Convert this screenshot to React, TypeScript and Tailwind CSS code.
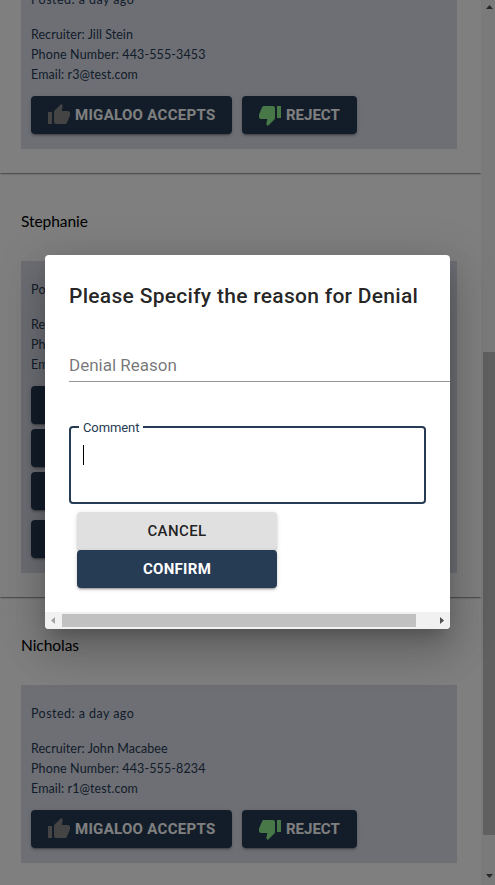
import React from "react";
import { MdThumbUp, MdThumbDown } from "react-icons/md";

const raised =
  "shadow-[0_3px_1px_-2px_rgba(0,0,0,.2),0_2px_2px_0_rgba(0,0,0,.14),0_1px_5px_0_rgba(0,0,0,.12)]";

function ActionButton({ kind, className = "" }: { kind: "accept" | "reject"; className?: string }) {
  const accept = kind === "accept";
  return (
    <button
      className={`flex h-[38px] shrink-0 items-center gap-1 rounded bg-[#263b54] pl-4 font-[Roboto,sans-serif] text-[15px] font-bold whitespace-nowrap text-white ${raised} ${accept ? "w-[201px]" : "w-[115px]"} ${className}`}
    >
      {accept ? (
        <MdThumbUp className="size-6 shrink-0 text-[#888]" />
      ) : (
        <MdThumbDown className="size-6 shrink-0 text-[#90ee90]" />
      )}
      <span className={accept ? "tracking-[0.3px]" : "tracking-[0px]"}>{accept ? "MIGALOO ACCEPTS" : "REJECT"}</span>
    </button>
  );
}

function Candidate({
  name,
  recruiter,
  phone,
  email,
  stacked = false,
}: {
  name: string;
  recruiter: string;
  phone: string;
  email: string;
  stacked?: boolean;
}) {
  return (
    <section className="bg-white pr-6 pb-6 pl-[21px] shadow-[0_2px_1px_-1px_rgba(0,0,0,.2),0_1px_1px_0_rgba(0,0,0,.14),0_1px_3px_0_rgba(0,0,0,.12)]">
      <h2 className="h-[72px] pt-[22px] text-[15.5px] leading-5 tracking-[-0.05px] text-black">{name}</h2>
      <div className="w-[436px] bg-[#dcdeea] px-2.5 pt-[19px] pb-[15px] text-[12.5px] leading-5 text-[#263b54]">
        <p className="tracking-[0.45px]">Posted: a day ago</p>
        <p className="mt-[15px] tracking-[0.05px]">Recruiter: {recruiter}</p>
        <p className="tracking-[0.13px]">Phone Number: {phone}</p>
        <p className="tracking-[0.1px]">Email: {email}</p>
        {stacked ? (
          <div className="mt-[11px] flex flex-col gap-[5px]">
            <ActionButton kind="accept" />
            <ActionButton kind="accept" />
            <ActionButton kind="accept" />
            <ActionButton kind="reject" className="mt-[5px]" />
          </div>
        ) : (
          <div className="mt-[11px] flex gap-2.5">
            <ActionButton kind="accept" />
            <ActionButton kind="reject" />
          </div>
        )}
      </div>
    </section>
  );
}

function DenialDialog() {
  return (
    <div className="flex h-[374px] w-[405px] flex-col overflow-hidden rounded bg-white font-[Roboto,sans-serif] shadow-[0_11px_15px_-7px_rgba(0,0,0,.2),0_24px_38px_3px_rgba(0,0,0,.14),0_9px_46px_8px_rgba(0,0,0,.12)]">
      <div className="flex-1 pl-6">
        <h1 className="pt-[25px] text-[21px] leading-8 font-medium tracking-[0.29px] whitespace-nowrap text-black/87">
          Please Specify the reason for Denial
        </h1>
        <div className="mt-10 h-[30px] border-b border-[#949494] text-[17px] leading-[27px] text-black/55">
          Denial Reason
        </div>
        <fieldset className="mt-[38px] h-[84px] w-[357px] rounded border-2 border-[#263b54] pl-3">
          <legend className="-ml-1 h-[14px] px-1 text-[13px] leading-4 tracking-[-0.1px] text-[#263b54]">
            Comment
          </legend>
          <div className="mt-[11px] h-5 w-px bg-black" />
        </fieldset>
        <div className="mt-2 ml-2 flex w-[200px] flex-col text-[15px] text-black/87">
          <button className={`h-[38px] rounded bg-[#e0e0e0] font-medium tracking-[0.4px] ${raised}`}>CANCEL</button>
          <button className={`h-[38px] rounded bg-[#263b54] font-bold tracking-[0.3px] text-white ${raised}`}>
            CONFIRM
          </button>
        </div>
      </div>
      <div className="flex h-[17px] items-center bg-[#f1f1f1]">
        <svg className="h-[17px] w-[17px]" viewBox="0 0 17 17">
          <path d="M10 5v7L6 8.5z" fill="#a3a3a3" />
        </svg>
        <div className="h-[13px] w-[354px] bg-[#c1c1c1]" />
        <svg className="ml-auto h-[17px] w-[17px]" viewBox="0 0 17 17">
          <path d="M7 5v7l4-3.5z" fill="#505050" />
        </svg>
      </div>
    </div>
  );
}

export default function App() {
  return (
    <div className="relative flex h-[885px] w-[495px] overflow-hidden bg-white font-[Lato,sans-serif]">
      <main className="-mt-[101px] flex h-[1100px] w-[481px] flex-col gap-4">
        <Candidate name="Jill" recruiter="Jill Stein" phone="443-555-3453" email="r3@test.com" />
        <Candidate name="Stephanie" recruiter="Jill Stein" phone="443-555-3453" email="r3@test.com" stacked />
        <Candidate name="Nicholas" recruiter="John Macabee" phone="443-555-8234" email="r1@test.com" />
      </main>
      <div className="flex w-[14px] flex-col items-end bg-[#f4f4f4]">
        <svg className="h-[352px] w-3" viewBox="0 0 12 352">
          <path d="M3 9h7L6.500 5z" fill="#505050" />
        </svg>
        <div className="h-[483px] w-3 bg-[#c1c1c1]" />
        <svg className="h-[50px] w-3" viewBox="0 0 12 50">
          <path d="M3 39h7l-3.500 4z" fill="#505050" />
        </svg>
      </div>
      <div className="absolute inset-0 bg-black/50 pt-[255px] pl-[45px]">
        <DenialDialog />
      </div>
    </div>
  );
}
